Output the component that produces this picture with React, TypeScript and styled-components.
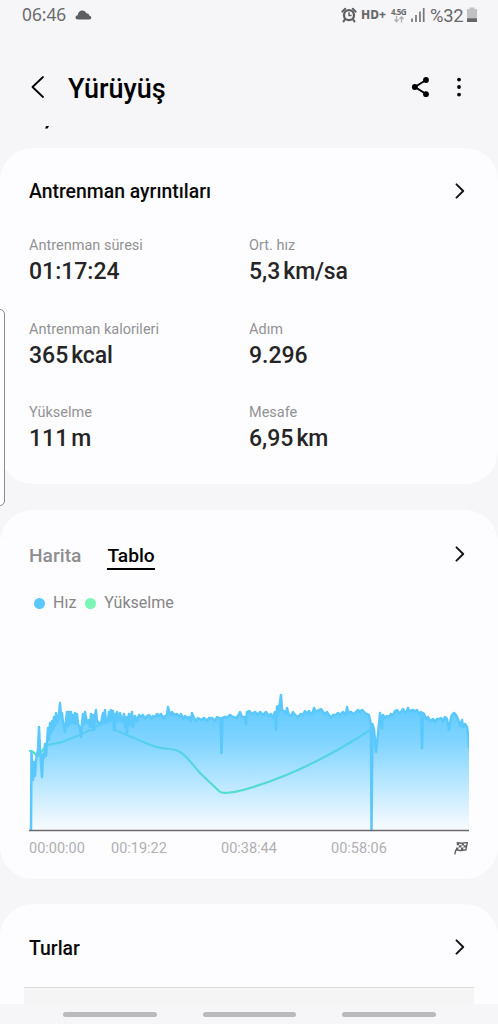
import styled, { createGlobalStyle, css } from "styled-components";

type Point = [number, number];

interface Stat {
  label: string;
  value: string;
  unit?: string;
}

const STATS: Stat[] = [
  { label: "Antrenman süresi", value: "01:17:24" },
  { label: "Ort. hız", value: "5,3", unit: "km/sa" },
  { label: "Antrenman kalorileri", value: "365", unit: "kcal" },
  { label: "Adım", value: "9.296" },
  { label: "Yükselme", value: "111", unit: "m" },
  { label: "Mesafe", value: "6,95", unit: "km" },
];

// x: 0 - 440, y: 0 - 140 (140 = baseline)
const SPEED: Point[] = [
  [2, 140], [2.5, 62], [4, 90], [5, 72], [6, 86], [7, 70], [9, 60], [10, 37], [11, 60], [12, 72],
  [13, 87], [14, 64], [15, 68], [16, 54], [17, 66], [19, 38], [20, 50], [21, 33], [22, 43], [23, 31],
  [24, 40], [25, 27], [26, 36], [27, 23], [28, 33], [30, 24], [31, 13], [32, 26], [33, 23], [34, 33],
  [36, 42], [37, 30], [38, 22], [39, 36], [40, 22], [41, 34], [42, 22], [43, 32], [44, 25], [45, 33],
  [46, 23], [47, 34], [48, 24], [49, 34], [51, 38], [52, 47], [53, 33], [54, 24], [55, 34], [56, 22],
  [58, 33], [60, 30], [61, 37], [62, 24], [63, 37], [64, 25], [65, 40], [66, 25], [67, 20], [68, 31],
  [70, 33], [72, 35], [73, 28], [74, 23], [75, 32], [76, 20], [77, 33], [79, 30], [80, 22], [81, 31],
  [82, 20], [83, 28], [84, 21], [85, 40], [86, 24], [87, 32], [88, 22], [89, 31], [91, 23], [93, 32],
  [95, 24], [96, 37], [97, 27], [98, 44], [99, 28], [100, 24], [101, 35], [102, 26], [103, 22], [104, 37],
  [106, 26], [108, 31], [110, 25], [112, 27], [114, 25], [116, 29], [118, 26], [120, 25], [122, 28], [124, 26],
  [126, 27], [128, 24], [130, 26], [132, 24], [134, 28], [136, 26], [138, 25], [139, 17], [141, 25], [143, 22],
  [145, 25], [148, 24], [150, 27], [152, 24], [154, 29], [156, 26], [158, 28], [160, 27], [162, 31], [163, 23],
  [165, 28], [167, 31], [169, 28], [172, 30], [175, 28], [178, 31], [180, 28], [183, 28], [186, 31], [188, 27],
  [190, 28], [191.5, 28], [192.5, 63], [193.5, 28], [196, 27], [199, 27], [201, 25], [204, 27], [207, 28], [209, 26],
  [211, 22], [213, 27], [216, 27], [217, 34], [218, 22], [220, 21], [223, 24], [226, 22], [229, 25], [231, 22],
  [234, 25], [237, 22], [240, 26], [242, 24], [244, 28], [246, 22], [247, 40], [248, 17], [249, 16], [250, 22],
  [251, 12], [252, 5], [253, 20], [255, 21], [257, 24], [258, 18], [260, 25], [262, 26], [264, 22], [266, 25],
  [269, 27], [272, 24], [274, 25], [276, 21], [278, 24], [280, 21], [283, 25], [285, 18], [287, 22], [290, 20],
  [292, 19], [294, 22], [296, 24], [298, 22], [300, 25], [302, 28], [304, 25], [307, 25], [309, 23], [311, 25],
  [314, 22], [317, 25], [318, 17], [319, 22], [322, 22], [324, 24], [326, 23], [329, 20], [331, 22], [333, 20],
  [336, 23], [338, 24], [340, 25], [341, 30], [342, 36], [342.5, 140], [343.5, 34], [345, 39], [347, 62], [349, 44],
  [350, 34], [351, 23], [353, 38], [354, 25], [356, 28], [358, 26], [360, 27], [362, 24], [364, 25], [366, 21],
  [368, 20], [370, 23], [372, 22], [374, 19], [376, 23], [378, 21], [379, 18], [381, 22], [383, 20], [386, 21],
  [388, 20], [390, 24], [392, 22], [393, 58], [394, 23], [395, 24], [397, 29], [399, 27], [401, 31], [404, 29],
  [406, 32], [408, 29], [410, 29], [412, 28], [414, 31], [416, 27], [418, 29], [420, 40], [422, 28], [423, 25],
  [425, 23], [427, 25], [429, 29], [431, 36], [433, 30], [434, 37], [436, 34], [438, 37], [439, 44], [440, 58],
];

const TIMES = ["00:00:00", "00:19:22", "00:38:44", "00:58:06"];

const speedLine = SPEED.map(([x, y]) => `${x},${y}`).join(" ");

const GlobalStyle = createGlobalStyle`
  * {
    box-sizing: border-box;
  }

  body {
    margin: 0;
    background-color: #f6f6f8;
    font-family: Roboto, "Liberation Sans", sans-serif;
    overflow: hidden;
  }
`;

function AlarmIcon() {
  return (
    <svg width="16" height="16" viewBox="0 0 16 16">
      <circle cx="8" cy="8.200" r="5" fill="none" stroke="#5f5f61" strokeWidth="2.300" />
      <path
        d="M1.300 4.600 4.200 1.700M11.800 1.700 14.700 4.600M3.800 12.600 2.600 14.400M12.200 12.600l1.200 1.800"
        stroke="#5f5f61"
        strokeWidth="2"
        strokeLinecap="round"
      />
      <path d="M8 5.200V8.400h2.600" fill="none" stroke="#5f5f61" strokeWidth="1.500" />
    </svg>
  );
}

function Chevron() {
  return (
    <svg width="10" height="16" viewBox="0 0 10 16">
      <path
        d="M1.500 1.300 8.200 8 1.500 14.700"
        fill="none"
        stroke="#111"
        strokeWidth="1.900"
        strokeLinecap="round"
        strokeLinejoin="round"
      />
    </svg>
  );
}

function FlagIcon() {
  return (
    <svg width="14" height="13" viewBox="0 0 14 13">
      <path
        d="M2.600.9C5 .2 6 1.600 8.300 1.200c2-.4 3.200-.8 5-.5L11.900 8c-1.900-.3-3 .3-4.700.5C5 8.700 4 7.700 1.700 8.300L.8 12.300"
        fill="none"
        stroke="#626264"
        strokeWidth="1.400"
      />
      <path
        d="M3 1h2.300L5 3.200H2.600zM8 1.500h2.200L9.800 3.500H7.600zM5 3.200h2.600L7.200 5.600H4.600zM9.800 3.300h2.800L12.200 5.500H9.500zM2.200 5.500h2.400L4.200 7.900H1.800zM7.200 5.600h2.300L9.100 8H6.800z"
        fill="#626264"
      />
    </svg>
  );
}

function Chart() {
  return (
    <svg width="440" height="142" viewBox="0 0 440 142">
      <defs>
        <linearGradient id="speedFill" x1="0" y1="15" x2="0" y2="140" gradientUnits="userSpaceOnUse">
          <stop offset="0" stopColor="#5ac8ff" stopOpacity="0.96" />
          <stop offset="0.3" stopColor="#5ac8ff" stopOpacity="0.76" />
          <stop offset="1" stopColor="#5ac8ff" stopOpacity="0.02" />
        </linearGradient>
      </defs>
      <path
        d="M0 61C4 60 6 64 8 66 11 66 14 57 19 55 24 53 31 54 38 50L51 45C56 42 60 40 64 40 70 34 77 30 85 31L86 40 98 45 112 51C124 57 131 58 141 59 154 60 158 68 171 83L190 101C192 104 203 103 214 100 250 90 291 73 341 40"
        fill="none"
        stroke="#4fe8b8"
        strokeWidth="2.200"
      />
      <polygon points={`2,140 ${speedLine} 440,140`} fill="url(#speedFill)" />
      <polyline points={speedLine} fill="none" stroke="#5ac8fc" strokeWidth="2.500" strokeLinejoin="round" />
      <path d="M0 140.500H440" stroke="#6b6b6d" strokeWidth="1.500" />
    </svg>
  );
}

function App() {
  return (
    <>
      <GlobalStyle />
      <Screen>
        <StatusBar>
          <Clock>06:46</Clock>
          <svg width="17" height="10" viewBox="0 0 17 10">
            <path
              d="M3 9.500C1.300 9.500.5 8.500.5 7.500.5 6 1.600 5.400 2.700 5.300 2.900 2.300 5 .6 7.300.6c2 0 3.300 1.100 4 2.600 2 0 3 1.100 3.100 2.500 1.200.2 1.900.9 1.900 1.900 0 1.200-.8 1.900-2 1.900z"
              fill="#5f5f61"
            />
          </svg>
          <StatusIcons>
            <AlarmIcon />
            <HdLabel>HD+</HdLabel>
            <Network>
              <span>4.5G</span>
              <svg width="10" height="7" viewBox="0 0 10 7">
                <path d="M2.500 0V6M.5 3.500l2 2.200 2-2.200M7.500 6.500V1M5.500 3l2-2.200L9.500 3" fill="none" stroke="#b0b0b2" strokeWidth="1.300" />
              </svg>
            </Network>
            <Signal width="14" height="14" viewBox="0 0 14 14">
              <path d="M1 10.500V14M5 7v7M9 3.500V14M12.700 0v14" stroke="#77777a" strokeWidth="1.700" />
            </Signal>
            <Percent>%32</Percent>
            <svg width="10" height="16" viewBox="0 0 10 16">
              <path d="M0 3Q0 2 1 2H2.500V.5H7.500V2H9Q10 2 10 3V15H0z" fill="#c2c2c4" />
              <path d="M0 11.300H10V15H0z" fill="#666668" />
            </svg>
          </StatusIcons>
        </StatusBar>

        <Header>
          <svg width="14" height="24" viewBox="0 0 14 24">
            <path d="M13 2 2.500 12 13 22" fill="none" stroke="#000" strokeWidth="1.800" strokeLinecap="round" strokeLinejoin="round" />
          </svg>
          <Title>Yürüyüş</Title>
          <svg width="20" height="20" viewBox="0 0 20 20">
            <path d="M16 3 5 10l11 7" fill="none" stroke="#000" strokeWidth="2" />
            <circle cx="16" cy="3" r="2.900" />
            <circle cx="4.800" cy="10" r="2.900" />
            <circle cx="16" cy="17.200" r="2.900" />
          </svg>
          <MenuIcon width="6" height="20" viewBox="0 0 6 20">
            <circle cx="3" cy="2.600" r="1.900" />
            <circle cx="3" cy="10" r="1.900" />
            <circle cx="3" cy="17.600" r="1.900" />
          </MenuIcon>
        </Header>
        <ScrolledText>
          <svg width="4" height="3" viewBox="0 0 4 3">
            <path d="M1.200 0H4L2.600 2.600H0z" />
          </svg>
        </ScrolledText>

        <Card $height={336}>
          <CardHeader $top={30.5}>
            <CardTitle>Antrenman ayrıntıları</CardTitle>
            <Chevron />
          </CardHeader>
          <StatGrid>
            {STATS.map((stat) => (
              <div key={stat.label}>
                <StatLabel>{stat.label}</StatLabel>
                <StatValue>
                  {stat.value}
                  {stat.unit ? <Unit>{stat.unit}</Unit> : null}
                </StatValue>
              </div>
            ))}
          </StatGrid>
        </Card>

        <Card $height={369}>
          <CardHeader $top={32}>
            <Tabs>
              <Tab>Harita</Tab>
              <Tab $active>Tablo</Tab>
            </Tabs>
            <Chevron />
          </CardHeader>
          <Legend>
            <Dot $color="#5ac8fa" />
            <span>Hız</span>
            <Dot $color="#7af5b4" />
            <span>Yükselme</span>
          </Legend>
          <Chart />
          <Axis>
            {TIMES.map((time) => (
              <span key={time}>{time}</span>
            ))}
            <FlagIcon />
          </Axis>
        </Card>

        <LastCard $height={100}>
          <CardHeader $top={31}>
            <CardTitle>Turlar</CardTitle>
            <Chevron />
          </CardHeader>
          <LapTable />
        </LastCard>
        <NavBar>
          <NavHandle />
          <NavHandle />
          <NavHandle />
        </NavBar>
        <EdgePanel />
      </Screen>
    </>
  );
}

const Screen = styled.div`
  position: relative;
  display: flex;
  flex-direction: column;
  width: 498px;
  height: 1024px;
  background-color: #f6f6f8;
  overflow: hidden;

  svg {
    display: block;
    flex-shrink: 0;
  }
`;

const StatusBar = styled.div`
  display: flex;
  align-items: center;
  height: 30px;
  padding: 0 21px 0 22px;
  color: #6a6a6c;
`;

const Clock = styled.span`
  width: 53px;
  font-family: "Noto Sans", sans-serif;
  font-size: 17.3px;
  line-height: 30px;
`;

const StatusIcons = styled.div`
  display: flex;
  align-items: center;
  margin-left: auto;
`;

const HdLabel = styled.span`
  width: 29px;
  margin: -2px 0 0 4px;
  font-family: "Noto Sans", sans-serif;
  font-size: 12px;
  font-weight: 800;
`;

const Network = styled.div`
  display: flex;
  flex-direction: column;
  align-items: center;
  width: 17px;
  margin-top: -1px;
  font-family: "Noto Sans", sans-serif;
  font-size: 8px;
  font-weight: 700;
  line-height: 9px;
  letter-spacing: -0.6px;
`;

const Signal = styled.svg`
  margin-left: 4px;
`;

const Percent = styled.span`
  width: 33px;
  margin: 0 4px 0 5px;
  font-size: 18.4px;
  letter-spacing: -0.3px;
`;

const Header = styled.header`
  display: flex;
  align-items: center;
  height: 96px;
  padding: 0 36px 0 30px;
  margin-top: 9px;
`;

const Title = styled.h1`
  flex: 1;
  margin: 4px 0 0 24px;
  color: #000;
  font-size: 27px;
  font-weight: 500;
  line-height: 36px;
`;

const MenuIcon = styled.svg`
  margin-left: 26px;
`;

const ScrolledText = styled.div`
  height: 22px;
  margin-top: -9px;
  padding-left: 45px;
`;

const Card = styled.section<{ $height: number }>`
  flex-shrink: 0;
  height: ${({ $height }) => $height}px;
  margin-bottom: 26px;
  padding: 0 29px;
  border-radius: 33px;
  background-color: #fdfdff;
`;

const LastCard = styled(Card)`
  margin: -1px 0 0;
  border-radius: 33px 33px 0 0;
`;

const CardHeader = styled.div<{ $top: number }>`
  display: flex;
  align-items: center;
  justify-content: space-between;
  height: 24px;
  padding-right: 4px;
  margin-top: ${({ $top }) => $top}px;
`;

const CardTitle = styled.h2`
  margin: 3px 0 0;
  color: #0a0a0a;
  font-size: 19.4px;
  font-weight: 500;
  line-height: 24px;
`;

const StatGrid = styled.div`
  display: grid;
  grid-template-columns: 220px 1fr;
  grid-auto-rows: 83.7px;
  margin-top: 33.5px;
`;

const StatLabel = styled.div`
  color: #929294;
  font-size: 14.5px;
  line-height: 20px;
`;

const StatValue = styled.div`
  color: #252527;
  font-size: 23px;
  font-weight: 500;
  line-height: 31px;
`;

const Unit = styled.span`
  margin-left: 3px;
  letter-spacing: -0.15px;
`;

const Tabs = styled.div`
  display: flex;
  gap: 26px;
`;

const Tab = styled.span<{ $active?: boolean }>`
  height: 31px;
  padding-top: 5px;
  border-bottom: 2px solid transparent;
  color: #8e8e90;
  font-size: 19.2px;
  font-weight: 500;
  line-height: 24px;

  ${({ $active }) =>
    $active &&
    css`
      color: #000;
      border-color: #000;
    `}
`;

const Legend = styled.div`
  display: flex;
  align-items: center;
  height: 20px;
  margin: 27px 0 77px 5px;
  color: #858587;
  font-size: 16px;
  line-height: 20px;
`;

const Dot = styled.i<{ $color: string }>`
  width: 11px;
  height: 11px;
  margin-right: 8px;
  border-radius: 50%;
  background-color: ${({ $color }) => $color};

  span + & {
    margin-left: 9px;
  }
`;

const Axis = styled.div`
  display: grid;
  grid-template-columns: 82px 110px 110px 1fr 15px;
  align-items: center;
  height: 20px;
  margin-top: 6px;
  color: #b0b0b3;
  font-size: 14.5px;
`;

const LapTable = styled.div`
  height: 17px;
  margin: 28px -5px 0;
  border-top: 1px solid #dcdcdc;
  background-color: #f5f5f5;
`;

const NavBar = styled.nav`
  display: flex;
  gap: 46px;
  padding: 8px 0 0 63px;
`;

const NavHandle = styled.div`
  width: 93.5px;
  height: 5px;
  border-radius: 3px;
  background-color: #bababc;
`;

// edge panel handle floats over the left side of the screen
const EdgePanel = styled.div`
  position: absolute;
  top: 309px;
  left: -6px;
  width: 11px;
  height: 197px;
  border: 1px solid #8c8c8e;
  border-radius: 5px;
  background-color: #fdfdff;
`;

export default App;
